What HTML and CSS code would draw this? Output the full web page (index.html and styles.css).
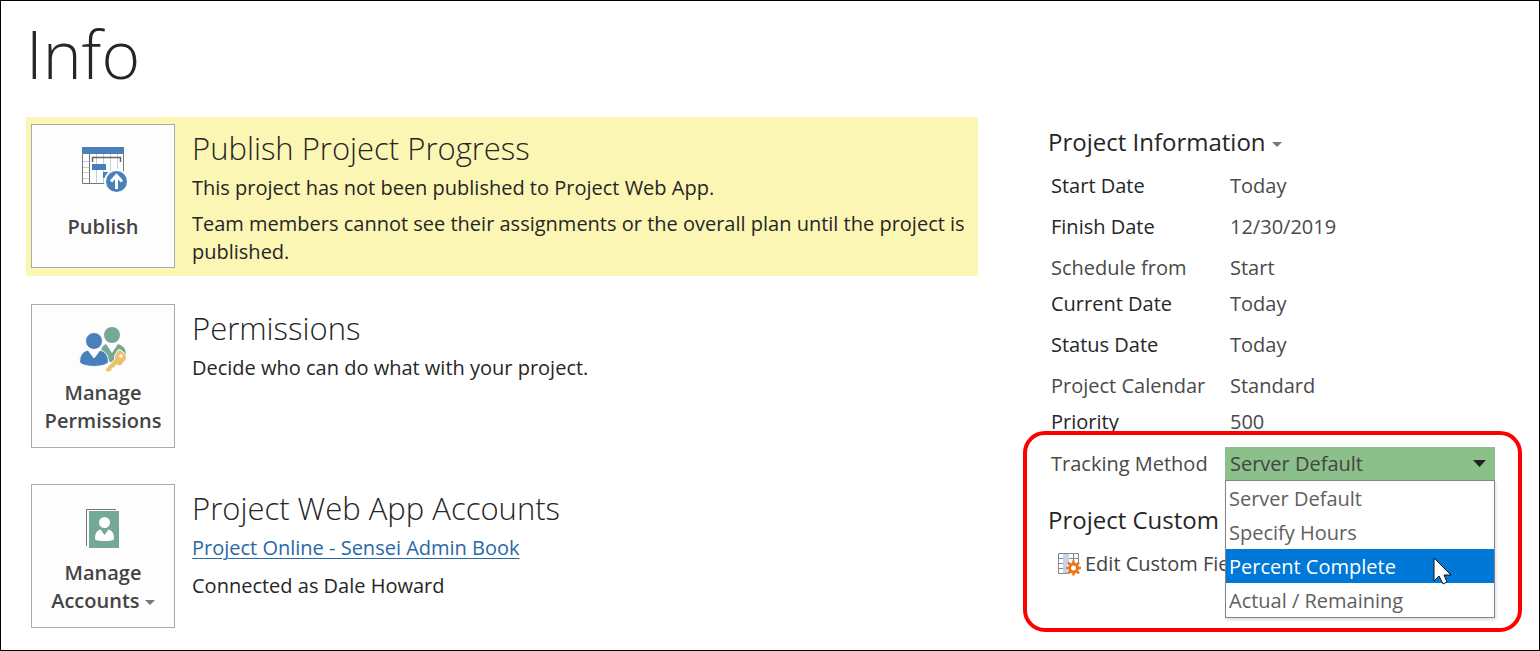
FILE: index.html
```html
<!DOCTYPE html>
<html lang="en">
<head>
<meta charset="utf-8">
<title>Info</title>
<link rel="stylesheet" href="styles.css">
</head>
<body>
<div class="page">
  <h1 class="page-title">Info</h1>
  <div class="columns">
    <main class="sections">
      <section class="section highlighted">
        <button class="tile" type="button">
          <svg class="tile-icon" width="46" height="48" viewBox="0 0 46 48" aria-hidden="true">
            <path d="M2.500 9V38.500H43.500V9" fill="#fff" stroke="#777" />
            <path d="M3 16.500H9M3 22.500H9M3 27.500H9M3 33.500H9M16.500 9V38M23.500 9V38M30.500 9V38M37.500 9V38" stroke="#b9d0e6" fill="none"/>
            <path d="M9.500 9V38" stroke="#777"/>
            <rect x="2" y="2" width="42" height="7" fill="#4a80b9"/>
            <path d="M12.500 17V12.500H40.500V17" stroke="#666" stroke-width="1.500" fill="none"/>
            <rect x="12" y="19" width="14" height="6" fill="#4a80b9"/>
            <rect x="23" y="27" width="12" height="6" fill="#4a80b9"/>
            <circle cx="36.500" cy="36.500" r="11.500" fill="#4a80b9" stroke="#fdfdfd" stroke-width="2"/>
            <path d="M36.500 44V31M31 36.500L36.500 30.500L42 36.500" stroke="#fff" stroke-width="3" fill="none"/>
          </svg>
          <span class="tile-label single">Publish</span>
        </button>
        <div class="section-text">
          <h2>Publish Project Progress</h2>
          <p>This project has not been published to Project Web App.</p>
          <p>Team members cannot see their assignments or the overall plan until the project is published.</p>
        </div>
      </section>
      <section class="section">
        <button class="tile" type="button">
          <svg class="tile-icon" width="46" height="48" viewBox="0 0 46 48" aria-hidden="true">
            <g fill="#73a995">
              <circle cx="32" cy="10" r="8"/>
              <path d="M21 27Q21 21 26 19L32 28L38 19Q46 21 46 30V34Q46 36 42 37H30Z"/>
            </g>
            <g fill="#4a80b9" stroke="#fdfdfd">
              <circle cx="14" cy="16" r="8.500"/>
              <path d="M-.5 37Q-.5 27 8 25L14 33L20 25Q28.500 27 28.500 37Q27 41 14 41.500Q1 41 -.5 37Z"/>
            </g>
            <path d="M38 25Q40 24 42 26L46 30Q47 32 46 34L42 40Q40 42 37 40L35 41V43H32V46H30L29 47H26L25.500 44L35 34Q34 32 35 30Z" fill="#edc06b" stroke="#fdfdfd"/>
            <circle cx="41" cy="31" r="1.800" fill="#fff"/>
          </svg>
          <span class="tile-label">Manage Permissions</span>
        </button>
        <div class="section-text">
          <h2>Permissions</h2>
          <p>Decide who can do what with your project.</p>
        </div>
      </section>
      <section class="section">
        <button class="tile" type="button">
          <svg class="tile-icon" width="46" height="48" viewBox="0 0 46 48" aria-hidden="true">
            <path d="M6.500 41V4.500H36" stroke="#777" fill="none"/>
            <rect x="9" y="6" width="30" height="37" fill="#73a995"/>
            <circle cx="24.500" cy="17.500" r="5.500" fill="#fff"/>
            <path d="M15 34Q14.500 26 20.500 24.500L24.500 30L28.500 24.500Q34.500 26 34 34Q33 36 24.500 36Q16 36 15 34Z" fill="#fff"/>
          </svg>
          <span class="tile-label">Manage Accounts <svg class="caret" width="10" height="5" viewBox="0 0 10 5" aria-hidden="true"><path d="M0 0H10L5 5Z" fill="#777"/></svg></span>
        </button>
        <div class="section-text">
          <h2>Project Web App Accounts</h2>
          <p class="account"><a href="#">Project Online - Sensei Admin Book</a></p>
          <p>Connected as Dale Howard</p>
        </div>
      </section>
    </main>

    <aside class="details">
      <button class="details-title" type="button">Project Information <svg class="caret" width="10" height="5" viewBox="0 0 10 5" aria-hidden="true"><path d="M0 0H10L5 5Z" fill="#777"/></svg></button>
      <dl class="properties">
        <div class="property"><dt>Start Date</dt><dd>Today</dd></div>
        <div class="property"><dt>Finish Date</dt><dd>12/30/2019</dd></div>
        <div class="property tight"><dt class="muted">Schedule from</dt><dd>Start</dd></div>
        <div class="property"><dt>Current Date</dt><dd>Today</dd></div>
        <div class="property"><dt>Status Date</dt><dd>Today</dd></div>
        <div class="property tight"><dt class="muted">Project Calendar</dt><dd>Standard</dd></div>
        <div class="property"><dt>Priority</dt><dd>500</dd></div>
      </dl>
      <div class="tracking">
        <label class="muted" for="tracking-method">Tracking Method</label>
        <div class="dropdown">
          <select id="tracking-method">
            <option>Server Default</option>
            <option>Specify Hours</option>
            <option>Percent Complete</option>
            <option>Actual / Remaining</option>
          </select>
          <svg class="dropdown-arrow" width="13" height="7" viewBox="0 0 13 7" aria-hidden="true"><path d="M0 0H13L6.500 7Z" fill="#222"/></svg>
          <ul class="dropdown-list" role="listbox" aria-label="Tracking Method">
            <li role="option">Server Default</li>
            <li role="option">Specify Hours</li>
            <li role="option" class="active" aria-selected="true">Percent Complete</li>
            <li role="option">Actual / Remaining</li>
          </ul>
          <svg class="pointer" width="19" height="28" viewBox="0 0 19 28" aria-hidden="true"><path d="M1 1V24L6 19L10 27L14 25L11 18H18Z" fill="#fff" stroke="#111"/></svg>
        </div>
      </div>
      <h3 class="custom-title">Project Custom</h3>
      <button class="edit-fields" type="button">
        <svg width="24" height="24" viewBox="0 0 24 24" aria-hidden="true">
          <rect x="1.500" y="1.500" width="20" height="20" fill="#fff"/>
          <rect x="6" y="1" width="6" height="21" fill="#c3d5e9"/>
          <path d="M1.500 1.500H21.500V11M1.500 1.500V21.500H10M1.500 6.500H6M1.500 11.500H6M1.500 16.500H6M12 6.500H21M12 11.500H21M16.500 2V9" stroke="#888" fill="none"/>
          <circle cx="16.500" cy="16" r="7" fill="#fff"/>
          <circle cx="16.500" cy="16" r="4" fill="none" stroke="#e8761b" stroke-width="3"/>
          <path d="M16.500 11.500V8.500M16.500 20.500V23.500M12 16H9M21 16H24M13 12.500L11 10.500M20 12.500L22 10.500M13 19.500L11 21.500M20 19.500L22 21.500" stroke="#e8761b" stroke-width="2.500"/>
        </svg>
        <span>Edit Custom Fie</span>
      </button>
      <div class="callout"></div>
    </aside>
  </div>
</div>
</body>
</html>
```
FILE: styles.css
```css
* {
  box-sizing: border-box;
}

body {
  margin: 0;
  background: #fff;
  color: #262626;
  font: 20px/28px "Open Sans", "Noto Sans", sans-serif;
}

h1, h2, h3, p, dl, dd, ul {
  margin: 0;
  padding: 0;
}

button {
  font: inherit;
  color: inherit;
  border: 0;
  background: none;
  padding: 0;
  cursor: pointer;
}

.page {
  min-height: 100vh;
  border: 1px solid #000;
  padding: 6px 44px 8px 25px;
}

.page-title {
  font-size: 66px;
  font-weight: 300;
  line-height: 92px;
}

.columns {
  display: flex;
  gap: 70px;
  padding-top: 18px;
}

.sections {
  flex: 1;
  display: flex;
  flex-direction: column;
  gap: 21px;
}

.section {
  display: flex;
  gap: 17px;
  padding: 7px 5px 8px;
}

.highlighted {
  background: #fcf6b5;
}

.tile {
  flex: none;
  width: 144px;
  height: 144px;
  display: flex;
  flex-direction: column;
  align-items: center;
  gap: 6px;
  padding-top: 20px;
  border: 1px solid #ababab;
  background: #fdfdfd;
  color: #444;
  font-weight: 600;
}

.tile-icon {
  flex: none;
  overflow: visible;
}

.single {
  padding-top: 14px;
}

.caret {
  vertical-align: middle;
}

.section-text h2 {
  font-size: 31px;
  font-weight: 300;
  line-height: 40px;
  padding: 4px 0 6px;
}

.section-text p + p {
  margin-top: 8px;
}

.section-text .account + p {
  margin-top: 10px;
}

a {
  color: #2a68a5;
  text-underline-offset: 3px;
  text-decoration-thickness: 1px;
}

.details {
  position: relative;
  flex: none;
  width: 447px;
  padding-top: 8px;
}

.details-title,
.custom-title {
  font-size: 24px;
  font-weight: 400;
  line-height: 34px;
}

.properties {
  padding: 13px 0 0 3px;
}

.property {
  display: flex;
  margin-bottom: 13px;
}

.tight {
  margin-bottom: 8px;
}

.property dt {
  width: 179px;
}

.property dd,
.muted {
  color: #4a4a4a;
}

.tracking {
  display: flex;
  align-items: center;
  padding-left: 3px;
  height: 34px;
  margin-top: -2px;
}

.tracking label {
  width: 174px;
}

.dropdown {
  position: relative;
  flex: 1;
}

.dropdown select {
  display: block;
  appearance: none;
  width: 100%;
  height: 34px;
  padding: 0 5px;
  border: 0;
  border-radius: 0;
  background: #8bc08b;
  color: #444;
  font: inherit;
}

.dropdown-arrow {
  position: absolute;
  right: 9px;
  top: 13px;
  pointer-events: none;
}

.dropdown-list {
  position: absolute;
  z-index: 2;
  top: 33px;
  left: 0;
  right: 0;
  border: 1px solid #7f8390;
  background: #fff;
  color: #606060;
  list-style: none;
  box-shadow: 1px 2px 3px #0002;
}

.dropdown-list li {
  height: 34px;
  padding: 0 3px;
  line-height: 36px;
}

.dropdown-list .active {
  background: #0078d7;
  color: #fff;
}

.pointer {
  position: absolute;
  z-index: 3;
  right: 43px;
  top: 110px;
}

.custom-title {
  padding-top: 22px;
}

.edit-fields {
  display: flex;
  align-items: center;
  gap: 4px;
  margin-top: 13px;
  padding-left: 9px;
  color: #444;
}

.callout {
  position: absolute;
  z-index: 4;
  top: 314px;
  left: -25px;
  right: -27px;
  height: 201px;
  border: 4px solid #f00;
  border-radius: 22px;
  pointer-events: none;
}
```
